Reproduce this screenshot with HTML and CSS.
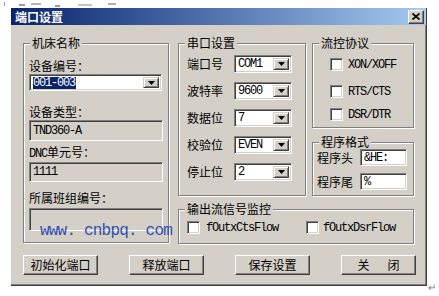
FILE: index.html
```html
<!DOCTYPE html>
<html>
<head>
<meta charset="utf-8">
<link rel="stylesheet" href="styles.css">
</head>
<body>
<div class="noise">
  <span class="mk m1"></span><span class="mk m2"></span><span class="mk m3"></span><span class="mk m4"></span><span class="mk m5"></span><span class="mk m6"></span>
</div>
<div class="page">
  <div class="window">
    <div class="titlebar">
      <span class="title">端口设置</span>
      <span class="close"><svg width="8" height="7" viewBox="0 0 8 7"><path d="M0.5 0.5 L7.5 6.5 M7.5 0.5 L0.5 6.5" stroke="#000" stroke-width="1.7" fill="none"/></svg></span>
    </div>
    <div class="client">
      <div class="groups">
        <div class="group g-machine">
          <span class="legend">机床名称</span>
          <div class="lbl l1">设备编号：</div>
          <div class="combo c-device"><span class="val"><span class="sel">001-003</span></span><span class="drop"><svg width="7" height="4" viewBox="0 0 7 4"><path d="M0 0 H7 L3.5 4 Z" fill="#000"/></svg></span></div>
          <div class="lbl l2">设备类型：</div>
          <div class="field f2"><span class="val">TND360-A</span></div>
          <div class="lbl l3"><span class="asc">DNC</span>单元号：</div>
          <div class="field f3"><span class="val">1111</span></div>
          <div class="lbl l4">所属班组编号：</div>
          <div class="field f4"></div>
          <span class="watermark">www. cnbpq. com</span>
        </div>
        <div class="right-area">
          <div class="top-row">
            <div class="group g-serial">
              <span class="legend">串口设置</span>
              <div class="srow"><span class="slbl">端口号</span><div class="combo c-small"><span class="val">COM1</span><span class="drop"><svg width="7" height="4" viewBox="0 0 7 4"><path d="M0 0 H7 L3.5 4 Z" fill="#000"/></svg></span></div></div>
              <div class="srow"><span class="slbl">波特率</span><div class="combo c-small"><span class="val">9600</span><span class="drop"><svg width="7" height="4" viewBox="0 0 7 4"><path d="M0 0 H7 L3.5 4 Z" fill="#000"/></svg></span></div></div>
              <div class="srow"><span class="slbl">数据位</span><div class="combo c-small"><span class="val">7</span><span class="drop"><svg width="7" height="4" viewBox="0 0 7 4"><path d="M0 0 H7 L3.5 4 Z" fill="#000"/></svg></span></div></div>
              <div class="srow"><span class="slbl">校验位</span><div class="combo c-small"><span class="val">EVEN</span><span class="drop"><svg width="7" height="4" viewBox="0 0 7 4"><path d="M0 0 H7 L3.5 4 Z" fill="#000"/></svg></span></div></div>
              <div class="srow"><span class="slbl">停止位</span><div class="combo c-small"><span class="val">2</span><span class="drop"><svg width="7" height="4" viewBox="0 0 7 4"><path d="M0 0 H7 L3.5 4 Z" fill="#000"/></svg></span></div></div>
            </div>
            <div class="right-col">
              <div class="group g-flow">
                <span class="legend">流控协议</span>
                <div class="chk ck1"><span class="box"></span><span class="asc">XON/XOFF</span></div>
                <div class="chk ck2"><span class="box"></span><span class="asc">RTS/CTS</span></div>
                <div class="chk ck3"><span class="box"></span><span class="asc">DSR/DTR</span></div>
              </div>
              <div class="group g-format">
                <span class="legend">程序格式</span>
                <div class="frow"><span class="flbl">程序头</span><div class="input"><span class="val">&amp;HE:</span></div></div>
                <div class="frow"><span class="flbl">程序尾</span><div class="input"><span class="val">%</span></div></div>
              </div>
            </div>
          </div>
          <div class="group g-monitor">
            <span class="legend">输出流信号监控</span>
            <div class="chk mk1"><span class="box"></span><span class="asc">fOutxCtsFlow</span></div>
            <div class="chk mk2"><span class="box"></span><span class="asc">fOutxDsrFlow</span></div>
          </div>
        </div>
      </div>
      <div class="buttons">
        <button class="btn">初始化端口</button>
        <button class="btn">释放端口</button>
        <button class="btn">保存设置</button>
        <button class="btn">关&emsp;&ensp;闭</button>
      </div>
    </div>
  </div>
  <span class="para">↵</span>
</div>
</body>
</html>
```

FILE: styles.css
```css
* { box-sizing: border-box; }

body {
  margin: 0;
  width: 439px;
  height: 296px;
  overflow: hidden;
  background: #fff;
  font-family: "Noto Sans CJK SC", sans-serif;
  font-size: 12px;
  color: #000;
}

.noise {
  height: 8px;
  display: flex;
  align-items: flex-start;
  padding: 2px 0 0 4px;
}
.mk { display: block; background: #9a9a9a; height: 2px; }
.m1 { width: 1px; height: 4px; margin-right: 14px; }
.m2 { width: 6px; margin-top: 2px; margin-right: 6px; }
.m3 { width: 10px; margin-top: 1px; margin-right: 14px; background: #b8b8b8; }
.m4 { width: 5px; margin-top: 3px; margin-right: 18px; }
.m5 { width: 14px; margin-top: 2px; margin-right: 16px; background: #c4c4c4; }
.m6 { width: 8px; margin-top: 1px; background: #b0b0b0; }

.page {
  display: flex;
  align-items: flex-end;
  padding-left: 11px;
}

.window {
  width: 416px;
  height: 278px;
  background: #d4d0c8;
  border-right: 1px solid #404040;
  border-bottom: 1px solid #404040;
  box-shadow: inset -1px -1px 0 #808080;
  display: flex;
  flex-direction: column;
}

.para {
  color: #777;
  font-size: 10px;
  line-height: 10px;
  margin-bottom: -6px;
  margin-left: 1px;
}

.titlebar {
  height: 17px;
  background: linear-gradient(90deg, #0a246a 0%, #3a5c9c 35%, #a6caf0 100%);
  display: flex;
  align-items: center;
  justify-content: space-between;
  padding: 0 2px 0 4px;
}
.title {
  color: #fff;
  font-weight: bold;
  font-size: 12px;
  line-height: 14px;
}
.close {
  width: 16px;
  height: 14px;
  background: #d4d0c8;
  border: 1px solid;
  border-color: #fff #404040 #404040 #fff;
  box-shadow: inset -1px -1px 0 #808080;
  display: flex;
  align-items: center;
  justify-content: center;
}
.close svg { display: block; }

.client {
  display: flex;
  flex-direction: column;
  padding: 18px 10px 0 12px;
}

.groups {
  display: flex;
  align-items: flex-start;
  gap: 9px;
}

.group {
  position: relative;
  border: 1px solid #808080;
  box-shadow: inset 1px 1px 0 #fff, 1px 1px 0 #fff;
}
.legend {
  position: absolute;
  top: -8px;
  left: 6px;
  padding: 0 2px;
  background: #d4d0c8;
  line-height: 14px;
  white-space: nowrap;
}

.asc {
  font-family: "Liberation Mono", monospace;
  font-size: 12px;
  letter-spacing: -1.2px;
}

/* sunken controls */
.combo, .field, .input {
  border: 1px solid;
  border-color: #808080 #fff #fff #808080;
  box-shadow: inset 1px 1px 0 #404040, inset -1px -1px 0 #d4d0c8;
  display: flex;
  align-items: center;
  padding: 2px;
}
.combo, .input { background: #fff; }
.field { background: #d4d0c8; }

.val {
  flex: 1;
  font-family: "Liberation Mono", monospace;
  font-size: 12px;
  letter-spacing: -1.2px;
  line-height: 12px;
  padding-left: 1px;
  white-space: nowrap;
  overflow: hidden;
}
.sel {
  background: #0a246a;
  color: #fff;
  padding: 0 1px 0 0;
}

.drop {
  width: 16px;
  align-self: stretch;
  background: #d4d0c8;
  border: 1px solid;
  border-color: #d4d0c8 #404040 #404040 #d4d0c8;
  box-shadow: inset 1px 1px 0 #fff, inset -1px -1px 0 #808080;
  display: flex;
  align-items: center;
  justify-content: center;
}
.drop svg { display: block; }

/* group 1 */
.g-machine {
  width: 146px;
  height: 200px;
  padding: 0 0 0 5px;
  display: flex;
  flex-direction: column;
  align-items: flex-start;
}
.lbl { line-height: 14px; height: 14px; white-space: nowrap; }
.l1 { margin-top: 15px; }
.c-device { margin-top: 1px; width: 133px; height: 17px; }
.l2 { margin-top: 14px; }
.f2 { margin-top: 1px; width: 134px; height: 21px; }
.l3 { margin-top: 4px; }
.f3 { margin-top: 3px; width: 134px; height: 20px; }
.l4 { margin-top: 9px; }
.f4 { margin-top: 3px; width: 134px; height: 23px; }

.watermark {
  position: absolute;
  left: 16px;
  top: 178px;
  font-family: "Liberation Mono", monospace;
  font-size: 16px;
  letter-spacing: -0.8px;
  line-height: 18px;
  color: #2f4fae;
  white-space: nowrap;
}

/* right area */
.right-area {
  width: 236px;
  display: flex;
  flex-direction: column;
}
.top-row {
  display: flex;
  gap: 6px;
}

.g-serial {
  width: 128px;
  height: 153px;
  padding: 11px 0 0 8px;
  display: flex;
  flex-direction: column;
  gap: 9px;
}
.srow {
  display: flex;
  align-items: center;
  height: 18px;
}
.slbl { width: 47px; line-height: 14px; }
.c-small { width: 58px; height: 18px; }

.right-col {
  width: 102px;
  display: flex;
  flex-direction: column;
  gap: 14px;
}

.g-flow {
  height: 85px;
  padding: 0 0 0 17px;
  display: flex;
  flex-direction: column;
}
.chk {
  display: flex;
  align-items: center;
  height: 13px;
  gap: 5px;
  white-space: nowrap;
}
.box {
  width: 13px;
  height: 13px;
  background: #fff;
  border: 1px solid;
  border-color: #808080 #fff #fff #808080;
  box-shadow: inset 1px 1px 0 #404040, inset -1px -1px 0 #d4d0c8;
  flex: none;
}
.ck1 { margin-top: 14px; }
.ck2 { margin-top: 14px; }
.ck3 { margin-top: 10px; }

.g-format {
  height: 54px;
  padding: 6px 0 0 4px;
  display: flex;
  flex-direction: column;
  gap: 7px;
}
.frow {
  display: flex;
  align-items: center;
  height: 17px;
}
.flbl { width: 43px; line-height: 14px; }
.input { width: 47px; height: 17px; }

.g-monitor {
  margin-top: 13px;
  height: 35px;
  padding: 11px 0 0 8px;
  display: flex;
  align-items: flex-start;
}
.mk1 { width: 119px; gap: 6px; }
.mk2 { gap: 4px; }

.buttons {
  margin-top: 11px;
  display: flex;
  justify-content: space-between;
}
.btn {
  width: 75px;
  height: 20px;
  padding: 0;
  background: #d4d0c8;
  border: 1px solid;
  border-color: #fff #404040 #404040 #fff;
  box-shadow: inset -1px -1px 0 #808080;
  font-family: "Noto Sans CJK SC", sans-serif;
  font-size: 12px;
  line-height: 14px;
  color: #000;
}
```
